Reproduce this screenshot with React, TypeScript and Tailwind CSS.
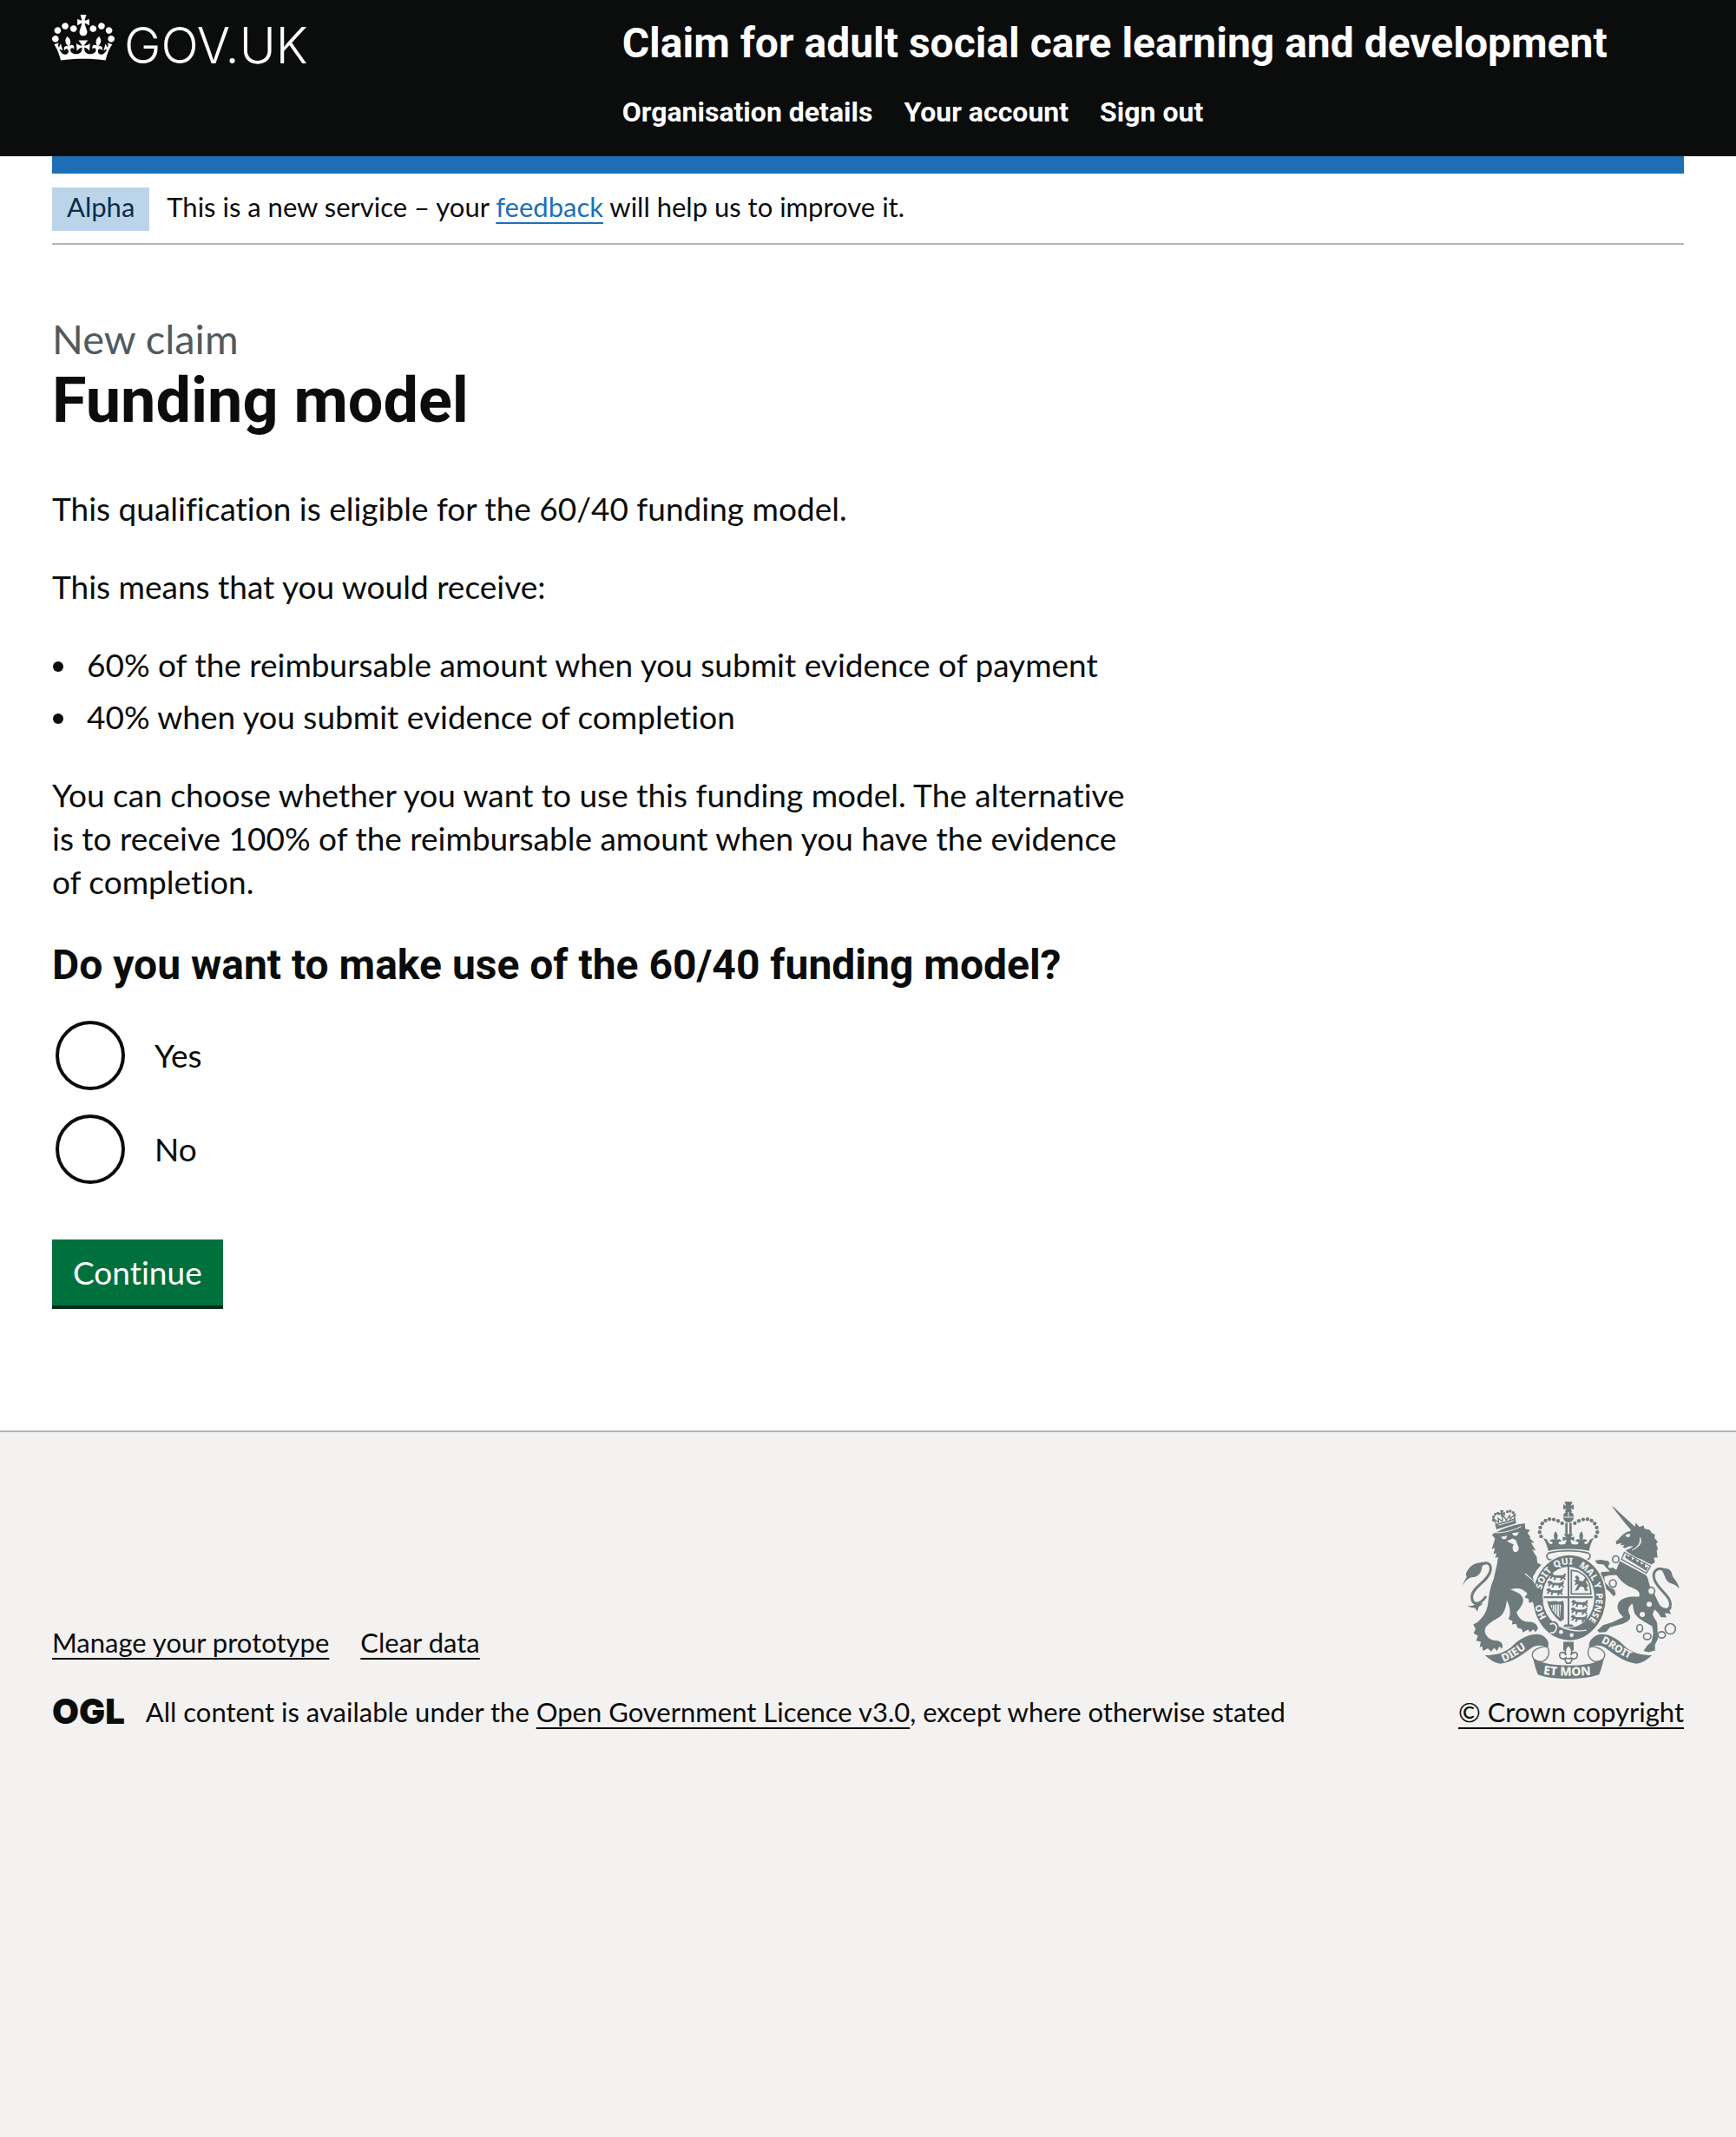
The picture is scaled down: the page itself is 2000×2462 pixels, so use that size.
import React from 'react';

const link =
  'underline decoration-2 underline-offset-[6px] [text-decoration-skip-ink:none] hover:decoration-4';

function Crown() {
  return (
    <svg viewBox="0 0 132 97" className="h-[53px] w-[72px] shrink-0" fill="currentColor" aria-hidden="true">
      <path d="M25 30.2c3.5 1.5 7.7-.2 9.1-3.7 1.5-3.6-.2-7.8-3.9-9.2-3.6-1.4-7.6.3-9.1 3.9-1.4 3.5.3 7.5 3.9 9zM9 39.5c3.6 1.5 7.8-.2 9.2-3.7 1.5-3.6-.2-7.8-3.9-9.1-3.6-1.5-7.6.2-9.1 3.8-1.4 3.5.3 7.5 3.8 9zM4.4 57.2c3.5 1.5 7.7-.2 9.1-3.8 1.5-3.6-.2-7.7-3.9-9.1-3.5-1.5-7.6.3-9.1 3.8-1.4 3.5.3 7.6 3.9 9.1zm38.3-21.4c3.5 1.5 7.7-.2 9.1-3.8 1.5-3.6-.2-7.7-3.9-9.1-3.6-1.5-7.6.3-9.1 3.8-1.3 3.6.4 7.7 3.9 9.1zm64.4-5.6c-3.6 1.5-7.8-.2-9.1-3.7-1.5-3.6.2-7.8 3.8-9.2 3.6-1.4 7.7.3 9.2 3.9 1.3 3.5-.4 7.5-3.9 9zm15.9 9.3c-3.6 1.5-7.7-.2-9.1-3.7-1.5-3.6.2-7.8 3.7-9.1 3.6-1.5 7.7.2 9.2 3.8 1.5 3.5-.3 7.5-3.8 9zm4.7 17.7c-3.6 1.5-7.8-.2-9.2-3.8-1.5-3.6.2-7.7 3.9-9.1 3.6-1.5 7.7.3 9.2 3.8 1.3 3.5-.4 7.6-3.9 9.1zM89.3 35.8c-3.6 1.5-7.8-.2-9.2-3.8-1.4-3.6.2-7.7 3.9-9.1 3.6-1.5 7.7.3 9.2 3.8 1.4 3.6-.3 7.7-3.9 9.1zM69.7 17.7l8.9 4.7V9.3l-8.9 2.8c-.2-.3-.5-.6-.9-.9L72.4 0H59.6l3.5 11.2c-.3.3-.6.5-.9.9l-8.8-2.8v13.1l8.8-4.7c.3.3.6.7.9.9l-5 15.4v.1c-.2.8-.4 1.6-.4 2.4 0 4.1 3.1 7.5 7 8.1h.2c.3 0 .7.1 1 .1.4 0 .7 0 1-.1h.2c4-.6 7.1-4.1 7.1-8.1 0-.8-.1-1.7-.4-2.4V34l-5.1-15.4c.4-.2.7-.6 1-.9zM66 92.8c16.9 0 32.8 1.1 47.1 3.2 4-16.9 8.9-26.7 14-33.5l-9.6-3.4c1 4.9 1.1 7.2 0 10.2-1.5-1.4-3-4.3-4.2-8.7L108.6 76c2.8-2 5-3.2 7.5-3.3-4.4 9.4-10 11.9-13.6 11.2-4.3-.8-6.3-4.6-5.6-7.9 1-4.7 5.7-5.9 8-.5 4.3-8.7-3-11.4-7.6-8.8 7.1-7.2 7.9-13.5 2.1-21.1-8 6.1-8.1 12.3-4.5 20.8-4.7-5.4-12.1-2.5-9.5 6.2 3.4-5.2 7.9-2 7.2 3.1-.6 4.3-6.4 7.8-13.5 7.2-10.3-.9-10.9-8-11.2-13.8 2.5-.5 7.1 1.8 11 7.3L80.2 60c-4.1 4.4-8 5.3-12.3 5.4 1.4-4.4 8-11.6 8-11.6H55.5s6.4 7.2 7.9 11.6c-4.2-.1-8-1-12.3-5.4l1.4 16.4c3.9-5.5 8.5-7.7 10.9-7.3-.3 5.8-.9 12.8-11.1 13.8-7.2.6-12.9-2.9-13.5-7.2-.7-5 3.8-8.3 7.1-3.1 2.7-8.7-4.6-11.6-9.4-6.2 3.7-8.5 3.6-14.7-4.6-20.8-5.8 7.6-5 13.9 2.2 21.1-4.7-2.6-11.9.1-7.7 8.8 2.3-5.5 7.1-4.2 8.1.5.7 3.3-1.3 7.1-5.7 7.9-3.5.7-9-1.8-13.5-11.2 2.5.1 4.7 1.3 7.5 3.3l-4.7-15.4c-1.2 4.4-2.7 7.2-4.3 8.7-1.1-3-.9-5.3 0-10.2l-9.5 3.4c5 6.9 9.9 16.7 14 33.5 14.8-2.1 30.8-3.2 47.7-3.2z" />
    </svg>
  );
}

const INK = '#6e7a7c';
const PAPER = '#f3f2f1';

const beads = [
  [386, 119], [372, 111], [357, 106], [342, 105], [328, 110],
  [317, 120], [310, 134], [308, 150], [313, 165],
];

const garterWords: [string, number][] = [
  ['HO', 92], ['SOIT', 192], ['QUI', 281], ['MAL', 366], ['Y', 446], ['PENSE', 480],
];

function LionPassant({ x, y }: { x: number; y: number }) {
  return (
    <path
      transform={`translate(${x} ${y})`}
      d="M2 4 7 0l8 2 3 5 22 1 10-2 5-6 6 3-5 3 2 5-4 5 6 6-4 2-8-6-4 7h-6l3-8-16-1-3 8h-7l4-9-6-2-5 7-6-2 5-7-6-3z"
    />
  );
}

function RoyalArms() {
  return (
    <svg viewBox="42 44 750 614" className="h-[204px] w-[250px]" fill={INK} aria-hidden="true">
      {/* Lion supporter */}
      <path d="M95 278C112 248 142 250 138 282C130 322 76 338 73 372C72 402 98 408 122 372" fill="none" stroke={INK} strokeWidth="9" />
      <path d="M40 336C50 306 60 308 52 298C54 284 70 262 90 258C104 254 116 252 122 256L108 264C110 290 92 306 76 306C62 308 50 318 40 336Z" />
      <path d="M58 403C70 410 80 402 92 396L112 398L96 410L92 426C88 416 84 412 78 412C70 412 62 410 58 403Z" />
      <path d="M142 158L162 148C182 136 216 126 238 122L257 119L258 138L275 143L266 152L277 168L272 170L290 186L278 186L295 214L282 210L298 236L300 256L314 263L299 280L284 306L290 326L318 380L318 396L306 405L300 396L290 405L282 392L272 396L270 382L256 376L266 362L250 350C240 344 224 343 206 349C222 356 248 362 251 384C251 402 240 412 228 428C234 446 246 460 268 461C286 460 300 468 302 484L294 496L286 487L274 497L268 487L250 498L246 486L232 482L226 468L212 470L214 458L200 452L204 440C208 420 202 400 194 386C190 420 182 438 156 452C132 466 116 478 118 496C124 516 140 526 160 526C176 528 184 540 177 554L168 546L160 562L150 551L140 564L128 553L112 562L108 546L100 548L104 530L88 526L94 510L79 500L86 486L78 470L92 462C112 446 122 430 128 404C132 372 136 340 148 314L160 262L164 236L154 240L158 222L148 226L153 205L142 208L150 184L153 172Z" />
      <path d="M258 294L284 318L306 358" fill="none" stroke={PAPER} strokeWidth="4" />
      <path d="M156 152C186 152 216 144 244 130" fill="none" stroke={PAPER} strokeWidth="3" />
      <g fill={PAPER}>
        <path d="M174 166L196 162L190 174L180 174ZM212 154L236 149L230 162L218 162Z" />
        <path d="M194 180L206 176L214 172L226 178L230 190L236 206C234 218 226 222 218 216C212 208 214 198 218 192L206 188Z" />
      </g>
      <g fill="none" stroke={INK} strokeWidth="4">
        <path d="M160 138L224 118L222 104L156 124Z" fill={INK} />
        <path d="M164 126L218 110" stroke={PAPER} strokeWidth="3" />
        <path d="M158 122L146 102L166 116L164 102L178 112L182 92L192 108L204 92L206 104L222 88L220 106" />
      </g>
      <path d="M170 74L184 74L180 82L188 80L188 92L180 88L182 96L174 98L174 88L166 92L166 82L174 83Z" />
      {[[148, 108], [148, 97], [154, 88], [163, 84], [196, 79], [206, 77], [216, 82], [221, 92]].map(([x, y]) => (
        <circle key={x * 1000 + y} cx={x} cy={y} r="5" />
      ))}

      {/* Unicorn supporter */}
      <path d="M558 60L566 64L642 134L626 144L602 116Z" />
      <path d="M572 182L582 174C592 160 604 150 620 146L638 134L641 117L654 132L668 126L672 138L690 142L696 152L708 158L706 170L718 184L712 190L718 208L714 214L717 238L704 238L708 254L696 262L682 256L664 246L644 238L624 226L606 214C612 208 626 206 632 198L616 200L604 206L596 202L602 194L588 196L592 188L574 192Z" />
      <path d="M606 160L622 156L618 166L610 166ZM656 168C666 188 652 202 628 212C648 202 658 190 656 168Z" fill={PAPER} stroke={PAPER} strokeWidth="2" />
      <path d="M602 220L692 268L678 292L592 244Z" fill={PAPER} stroke={INK} strokeWidth="4" />
      <path d="M604 238L608 226L616 236L626 230L628 246L640 240L646 254L656 248L660 262L672 256L674 272L684 270L678 284Z" />
      <path d="M586 250L676 298C690 314 682 330 700 352C718 388 720 400 740 424L748 446L728 444C722 432 714 424 706 418L700 434C704 450 716 458 716 470L718 520L708 540L708 560L686 566L668 562L682 542L696 530L702 500L698 476C676 462 650 452 638 432C630 412 634 404 628 398C614 412 612 420 622 440C624 452 616 460 596 468L552 480L538 496L514 498L508 490L528 472L560 462L598 444C582 430 572 412 582 394C594 376 620 372 652 374C662 356 640 346 618 338C596 326 584 310 574 298L548 300L532 304L534 324L552 342L568 350L572 366L564 372L548 354L530 342L514 322L512 300L524 288L552 286L538 272L530 262L508 260L500 248L520 246L546 250L556 270L574 280Z" />
      <path d="M742 282C718 268 696 286 706 314C718 350 766 372 761 404C756 428 734 420 708 396" fill="none" stroke={INK} strokeWidth="9" />
      <path d="M728 277C752 270 766 282 768 300C774 314 788 322 792 346C782 334 772 330 760 326C742 318 744 296 728 277Z" />
      <path d="M716 424C732 416 746 420 754 412L768 410L758 422L764 434L744 430L736 446Z" />
      <g fill="none" stroke={INK} strokeWidth="5">
        <ellipse cx="572" cy="244" rx="11" ry="12" />
        <ellipse cx="562" cy="328" rx="12" ry="13" fill={PAPER} />
        <ellipse cx="695" cy="354" rx="12" ry="13" fill={PAPER} />
        <ellipse cx="655" cy="483" rx="10" ry="13" />
        <ellipse cx="681" cy="511" rx="13" ry="11" />
        <ellipse cx="731" cy="506" rx="13" ry="11" />
        <circle cx="761" cy="485" r="18" />
      </g>
      <circle cx="553" cy="268" r="7" fill={PAPER} />
      <circle cx="688" cy="400" r="9" fill={PAPER} />
      <circle cx="664" cy="435" r="9" fill={PAPER} />

      {/* Crown */}
      <path d="M394 44H422L416 58L426 54V72L416 68L420 80H396L400 68L390 72V54L400 58Z" />
      <circle cx="408" cy="97" r="19" />
      <path d="M388 98H428M408 80V98" stroke={PAPER} strokeWidth="3" />
      {beads.map(([x, y]) => (
        <g key={x}>
          <circle cx={x} cy={y} r="6.5" />
          <circle cx={816 - x} cy={y} r="6.5" />
        </g>
      ))}
      <path d="M397 118H405V156H397ZM411 118H419V156H411Z" />
      <path d="M392 156H424L416 168L428 166V180L414 176L420 192H396L402 176L388 180V166L400 168Z" />
      <path d="M320 170L334 176C338 188 344 194 352 190C356 184 348 180 342 182C346 172 356 172 360 178C356 166 356 156 363 147C372 156 372 166 367 178C372 172 382 172 384 182C378 180 372 184 374 190C384 196 394 190 408 190C422 190 432 196 442 190C444 184 438 180 432 182C434 172 444 172 449 178C444 166 444 156 453 147C460 156 460 166 456 178C460 172 470 172 474 182C468 180 460 184 464 190C472 194 478 188 482 176L496 170C488 184 482 196 480 215C440 206 376 206 338 215C334 196 328 184 320 170Z" />
      <path d="M340 222C380 212 436 212 476 222C488 230 484 242 472 246H344C332 242 328 230 340 222Z" fill={PAPER} stroke={INK} strokeWidth="5" />

      {/* Garter and shield */}
      <ellipse cx="411" cy="377" rx="131" ry="151" fill={PAPER} />
      <ellipse cx="411" cy="377" rx="126" ry="147" />
      <ellipse cx="408" cy="376" rx="90" ry="106" fill={PAPER} />
      <path d="M405 270H411V372H492V379H411V472H405V379H322V372H405Z" />
      <path d="M388 478H428L420 470H396Z" />
      <LionPassant x={340} y={292} />
      <LionPassant x={334} y={318} />
      <LionPassant x={330} y={344} />
      <LionPassant x={417} y={385} />
      <LionPassant x={415} y={411} />
      <LionPassant x={415} y={437} />
      <path d="M418 282L440 286C466 296 484 322 486 364H418Z" fill="none" stroke={INK} strokeWidth="5" />
      <path d="M430 304L438 300L446 308L444 318L458 320L466 308L476 314L468 322L476 336L470 344L478 352L466 354L460 340L448 338L442 350L430 354L436 342L442 330L428 334L434 324L426 318L436 314Z" />
      <path d="M334 388C346 394 362 384 372 392L390 388L392 398L392 452L380 460C360 444 340 420 334 388ZM346 402C350 420 362 436 378 446L382 402C370 398 358 404 346 402Z" fillRule="evenodd" />
      <path d="M352 402V418M360 402V430M368 400V438M376 400V442" stroke={INK} strokeWidth="3" />
      <path d="M340 468C352 452 370 458 374 474C394 484 412 490 432 492L446 476L466 474L492 474L508 460C486 506 452 524 412 524C386 522 366 514 352 504C336 500 330 484 340 468Z" />
      <path d="M374 474C398 488 436 496 470 490" fill="none" stroke={PAPER} strokeWidth="4" />
      <path d="M344 470C356 462 368 470 366 484C364 496 354 502 344 498" fill="none" stroke={PAPER} strokeWidth="5" />
      <circle cx="382" cy="496" r="7" fill={PAPER} />
      <circle cx="419" cy="507" r="7" fill={PAPER} />
      <path id="garter" d="M408 490A96 114 0 0 1 408 262A96 114 0 0 1 408 490" fill="none" />
      <g fill={PAPER} className="font-['Noto_Sans'] text-[32px] font-extrabold">
        {garterWords.map(([word, offset]) => (
          <text key={word}>
            <textPath href="#garter" startOffset={offset}>{word}</textPath>
          </text>
        ))}
      </g>

      {/* Fore paw over the garter */}
      <path d="M262 300L284 318L302 346L318 376L320 392L308 402L300 394L290 404L282 390L272 392L270 374L262 350Z" />

      {/* Pendant */}
      <path d="M390 530H426V560H390Z" />
      <path d="M408 540C420 552 422 564 416 576C426 560 442 566 438 582C434 592 424 590 418 586L420 594L414 604H402L396 594L398 586C392 590 382 592 378 582C374 566 390 560 400 576C394 564 396 552 408 540Z" fill={PAPER} stroke={INK} strokeWidth="5" />
      <path d="M392 588H424" stroke={INK} strokeWidth="5" />

      {/* Motto ribbon */}
      <g stroke={INK} strokeWidth="4">
        <path d="M334 546C312 546 282 556 282 576C284 594 300 600 318 598C336 590 348 570 334 546Z" fill={PAPER} />
        <path d="M482 546C504 546 534 556 534 576C532 594 516 600 498 598C480 590 468 570 482 546Z" fill={PAPER} />
      </g>
      <path d="M118 577C152 576 180 572 210 548C240 516 286 494 318 508C338 520 344 540 334 552C320 540 300 540 282 550C250 574 214 602 172 606C150 604 136 592 118 577Z" />
      <path d="M698 577C664 576 636 572 606 548C576 516 536 494 504 508C482 520 474 540 482 552C496 540 516 540 534 550C566 574 602 602 644 606C666 604 680 592 698 577Z" />
      <path d="M284 584C310 606 360 612 408 612C456 612 506 606 532 584L522 622L514 644C480 656 440 658 408 658C376 658 336 656 302 644L294 622Z" />
      <path id="motto-left" d="M182 600C220 588 246 560 300 530" fill="none" />
      <path id="motto-right" d="M520 532C560 550 590 584 660 604" fill="none" />
      <path id="motto-centre" d="M320 642C370 650 446 650 510 642" fill="none" />
      <g fill={PAPER} className="font-['Noto_Sans'] font-extrabold">
        <text className="text-[38px]"><textPath href="#motto-left">DIEU</textPath></text>
        <text className="text-[36px]"><textPath href="#motto-right">DROIT</textPath></text>
        <text className="text-[42px]"><textPath href="#motto-centre">ET MON</textPath></text>
      </g>
    </svg>
  );
}

function Radio({ id, label }: { id: string; label: string }) {
  return (
    <div className="flex items-center pl-1">
      <input
        id={id}
        type="radio"
        name="funding-model"
        value={id}
        className="size-20 shrink-0 cursor-pointer appearance-none rounded-full border-4 border-[#0b0c0c] bg-white checked:bg-[#0b0c0c] checked:shadow-[inset_0_0_0_16px_white]"
      />
      <label htmlFor={id} className="cursor-pointer pl-[34px]">{label}</label>
    </div>
  );
}

export default function App() {
  return (
    <div className="flex min-h-screen flex-col bg-white font-['Lato','Noto_Sans',sans-serif] text-[37px] leading-[50px] text-[#0b0c0c] [font-variant-ligatures:none]">
      <header className="bg-[#0b0c0c] px-[60px] text-white">
        <div className="flex items-start pt-[17px] pb-[31px]">
          <div className="w-1/3 shrink-0">
            <a href="#" aria-label="GOV.UK" className="inline-flex items-start gap-[11px]">
              <Crown />
              <span className="mt-1 font-['Inter',sans-serif] text-[57px] leading-[64px] font-light">GOV.UK</span>
            </a>
          </div>
          <div className="grow pl-[30px] font-['Roboto',sans-serif] font-bold">
            <a href="#" className="block text-[48px] leading-[66px]">
              Claim for adult social care learning and development
            </a>
            <nav aria-label="Menu" className="mt-[26px]">
              <ul className="flex flex-wrap gap-9 text-[32px] leading-10">
                <li><a href="#">Organisation details</a></li>
                <li><a href="#">Your account</a></li>
                <li><a href="#">Sign out</a></li>
              </ul>
            </nav>
          </div>
        </div>
      </header>

      <div className="px-[60px]">
        <div className="h-5 bg-[#1d70b8]" />
        <div className="flex items-baseline gap-5 border-b-2 border-[#b1b4b6] pt-4 pb-[14px] text-[31px]">
          <strong className="bg-[#bbd4ea] px-[17px] pb-[6px] leading-[44px] font-normal text-[#0c2d4a]">Alpha</strong>
          <p className="leading-[44px]">
            This is a new service – your <a href="#" className={`text-[#1d70b8] ${link}`}>feedback</a> will help us to improve it.
          </p>
        </div>
      </div>

      <main className="px-[60px] pt-[78px] pb-36">
        <div className="w-2/3">
          <h1>
            <span className="block text-[47px] leading-[60px] text-[#505a5f]">New claim</span>
            <span className="block font-['Roboto',sans-serif] text-[72px] leading-[84px] font-bold">Funding model</span>
          </h1>
          <div className="mt-[57px] space-y-10">
            <p>This qualification is eligible for the 60/40 funding model.</p>
            <p>This means that you would receive:</p>
            <ul className="list-disc space-y-[10px] pl-8">
              <li className="pl-2">60% of the reimbursable amount when you submit evidence of payment</li>
              <li className="pl-2">40% when you submit evidence of completion</li>
            </ul>
            <p>
              You can choose whether you want to use this funding model. The alternative is to receive 100% of the
              reimbursable amount when you have the evidence of completion.
            </p>
          </div>
          <form onSubmit={(e) => e.preventDefault()}>
            <fieldset className="mt-[39px]">
              <legend className="font-['Roboto',sans-serif] text-[48px] leading-[64px] font-bold">
                Do you want to make use of the 60/40 funding model?
              </legend>
              <div className="mt-8 space-y-7">
                <Radio id="yes" label="Yes" />
                <Radio id="no" label="No" />
              </div>
            </fieldset>
            <button type="submit" className="mt-16 block cursor-pointer bg-[#00703c] px-6 py-[13px] text-white shadow-[0_4px_0_#002d18]">
              Continue
            </button>
          </form>
        </div>
      </main>

      <footer className="grow border-t-2 border-[#b1b4b6] bg-[#f3f2f1] px-[60px] pt-20 text-[31px] leading-10">
        <div className="flex items-end justify-between gap-10">
          <div>
            <ul className="mb-10 flex flex-wrap gap-9">
              <li><a href="#" className={link}>Manage your prototype</a></li>
              <li><a href="#" className={link}>Clear data</a></li>
            </ul>
            <div className="flex items-end gap-6">
              <span className="font-['Inter',sans-serif] text-[40px] leading-10 font-black">OGL</span>
              <p>
                All content is available under the <a href="#" className={link}>Open Government Licence v3.0</a>, except where otherwise stated
              </p>
            </div>
          </div>
          <a href="#" className={`flex shrink-0 flex-col items-center gap-[18px] ${link}`}>
            <RoyalArms />
            <span>© Crown copyright</span>
          </a>
        </div>
      </footer>
    </div>
  );
}
